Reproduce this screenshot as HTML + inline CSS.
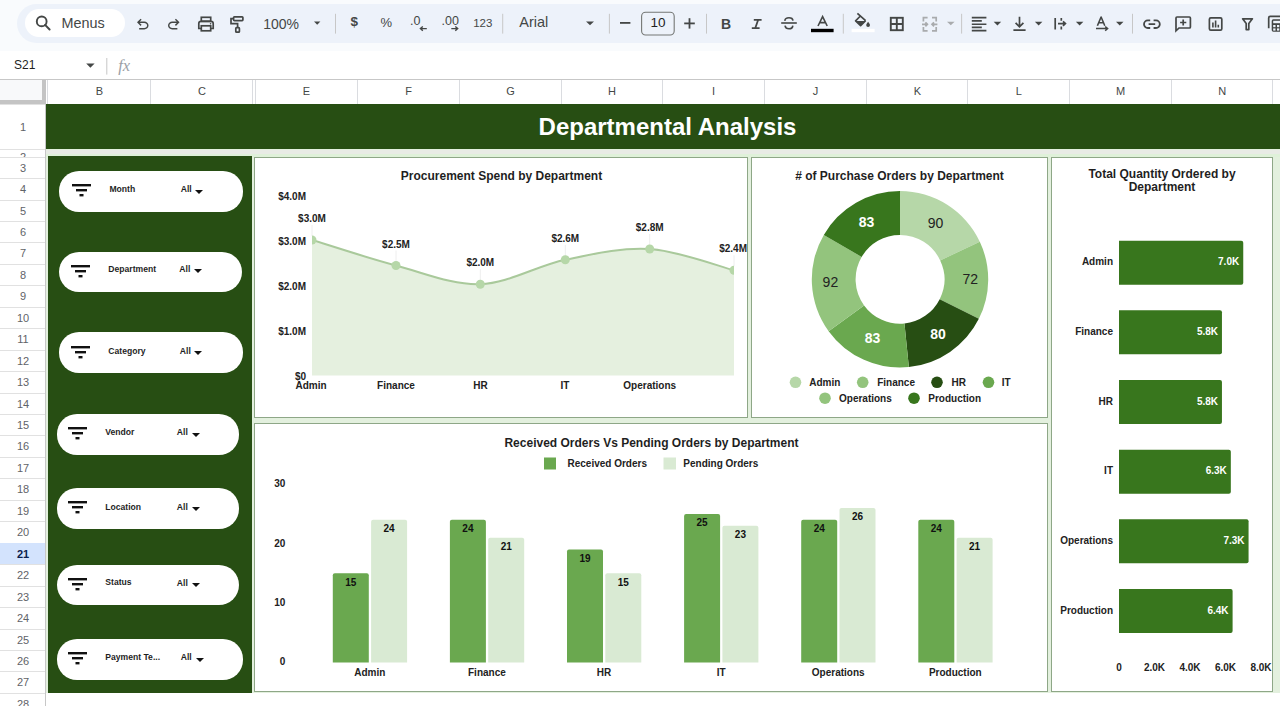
<!DOCTYPE html><html><head><meta charset="utf-8"><style>
*{box-sizing:border-box;margin:0;padding:0}
html,body{width:1280px;height:706px;overflow:hidden;background:#f9fbfd;font-family:"Liberation Sans",sans-serif;position:relative}
.a{position:absolute}
.t{position:absolute;white-space:nowrap}
.b10{font-size:10px;font-weight:bold;color:#222}
</style></head><body>
<div class="a" style="left:17px;top:4px;width:1300px;height:39px;background:#edf2fa;border-radius:20px"></div>
<div class="a" style="left:25px;top:9px;width:100px;height:28px;background:#fff;border-radius:14px"></div>
<div class="t" style="left:61.5px;top:14.8px;font-size:14.4px;line-height:17px;color:#444746">Menus</div>
<div class="a" style="left:0;top:51px;width:1280px;height:28px;background:#fff"></div>
<svg class="a" style="left:0;top:0" width="1280" height="80" viewBox="0 0 1280 80" font-family="Liberation Sans"><circle cx="41.7" cy="21.4" r="4.9" fill="none" stroke="#444746" stroke-width="1.9"/><line x1="45.1" y1="24.9" x2="49.6" y2="29.5" stroke="#444746" stroke-width="2" stroke-linecap="round"/><path transform="translate(134.12,33.08) scale(0.018)" d="M280-200v-80h284q63 0 109.5-40T720-420q0-60-46.5-100T564-560H312l104 104-56 56-200-200 200-200 56 56-104 104h252q97 0 166.5 63T800-420q0 94-69.5 157T564-200H280Z" fill="#444746"/><path transform="translate(165.12,33.08) scale(0.018)" d="M396-200q-97 0-166.5-63T160-420q0-94 69.5-157T396-640h252L544-744l56-56 200 200-200 200-56-56 104-104H396q-63 0-109.5 40T240-420q0 60 46.5 100T396-280h284v80H396Z" fill="#444746"/><rect x="201.3" y="17.3" width="9.4" height="4" fill="none" stroke="#444746" stroke-width="1.7"/><path d="M201.5,28.5 H198.8 V23.6 Q198.8,21.4 201,21.4 H211 Q213.2,21.4 213.2,23.6 V28.5 H210.5" fill="none" stroke="#444746" stroke-width="1.7"/><rect x="201.3" y="25.8" width="9.4" height="5" fill="none" stroke="#444746" stroke-width="1.7"/><circle cx="210.6" cy="23.8" r="0.8" fill="#444746"/><rect x="233.6" y="16.8" width="9.3" height="3.8" rx="0.8" fill="none" stroke="#444746" stroke-width="1.7"/><path d="M233.6,18.7 H231 V23.6 H237.6 V27.6" fill="none" stroke="#444746" stroke-width="1.7"/><rect x="235.8" y="27.6" width="3.6" height="4.6" rx="0.8" fill="none" stroke="#444746" stroke-width="1.7"/><path d="M314,21.4 L320.4,21.4 L317.2,24.8 Z" fill="#444746"/><path d="M586,21.4 L594,21.4 L590.0,25.2 Z" fill="#444746"/><path d="M947,21.8 L954.6,21.8 L950.8,25.2 Z" fill="#a9abad"/><path d="M993.7,21.7 L1001.2,21.7 L997.45,25.4 Z" fill="#444746"/><path d="M1034.9,21.7 L1042.4,21.7 L1038.65,25.4 Z" fill="#444746"/><path d="M1075.9,21.7 L1083.4,21.7 L1079.65,25.4 Z" fill="#444746"/><path d="M1116,21.7 L1123.5,21.7 L1119.75,25.4 Z" fill="#444746"/><rect x="335.0" y="13.8" width="1" height="19.8" fill="#c7c7c7"/><rect x="502.2" y="13.8" width="1" height="19.8" fill="#c7c7c7"/><rect x="608.9" y="13.8" width="1" height="19.8" fill="#c7c7c7"/><rect x="706.0" y="13.8" width="1" height="19.8" fill="#c7c7c7"/><rect x="842.8" y="13.8" width="1" height="19.8" fill="#c7c7c7"/><rect x="961.1" y="13.8" width="1" height="19.8" fill="#c7c7c7"/><rect x="1132.0" y="13.8" width="1" height="19.8" fill="#c7c7c7"/><text x="263.2" y="28.5" font-size="14" font-weight="normal" text-anchor="start" fill="#444746" >100%</text><text x="354.3" y="26.4" font-size="13.5" font-weight="bold" text-anchor="middle" fill="#444746" >$</text><text x="386.2" y="26.9" font-size="13" font-weight="normal" text-anchor="middle" fill="#444746" >%</text><text x="410" y="24.9" font-size="12.5" font-weight="normal" text-anchor="start" fill="#444746" >.0</text><path d="M426.8,28.6 H420.6 M422.8,26.4 L420.4,28.6 L422.8,30.8" fill="none" stroke="#444746" stroke-width="1.4"/><text x="441.6" y="24.9" font-size="12.5" font-weight="normal" text-anchor="start" fill="#444746" >.00</text><path d="M451.3,28.6 H457.5 M455.3,26.4 L457.7,28.6 L455.3,30.8" fill="none" stroke="#444746" stroke-width="1.4"/><text x="482.8" y="26.8" font-size="11.5" font-weight="normal" text-anchor="middle" fill="#444746" >123</text><text x="519.3" y="27.4" font-size="14.5" font-weight="normal" text-anchor="start" fill="#444746" >Arial</text><rect x="620" y="22" width="10.4" height="1.8" fill="#444746"/><rect x="641.6" y="12.2" width="32.6" height="22.8" rx="4" fill="none" stroke="#747775" stroke-width="1.1"/><text x="658" y="26.9" font-size="13.5" font-weight="normal" text-anchor="middle" fill="#1f1f1f" >10</text><rect x="684.2" y="22.5" width="10.6" height="1.8" fill="#444746"/><rect x="688.6" y="18.2" width="1.8" height="10.4" fill="#444746"/><text x="726" y="28.8" font-size="14" font-weight="bold" text-anchor="middle" fill="#444746" >B</text><path d="M753.8,19.8 H761.6 M751.8,28.2 H759.6 M758.2,19.8 L755.2,28.2" fill="none" stroke="#444746" stroke-width="1.8"/><rect x="781.2" y="22.2" width="15.6" height="1.6" fill="#444746"/><path d="M784.8,20.8 Q785.2,17.8 789,17.8 Q792.6,17.8 793,20.6 M785,25.6 Q785.6,28.8 789,28.8 Q792.6,28.8 792.8,25.6" fill="none" stroke="#444746" stroke-width="1.6"/><path d="M818,26 L822.6,16.6 L827.2,26 M819.8,22.6 H825.4" fill="none" stroke="#444746" stroke-width="1.6"/><rect x="811" y="28.8" width="22.6" height="3.4" fill="#000"/><path d="M857.4,13.4 L865.6,20.6 M860.4,16 L855.6,20.8 L860.6,25.6 L865.6,20.6" fill="none" stroke="#444746" stroke-width="1.7" stroke-linejoin="round"/><path d="M856,21 H865.2 L860.6,25.6 Z" fill="#444746"/><path d="M868.1,21.8 Q870,24 870,25 A1.9,1.9 0 0 1 866.2,25 Q866.2,24 868.1,21.8 Z" fill="#444746"/><rect x="851.6" y="28.8" width="23" height="3.4" fill="#fff"/><rect x="890.8" y="17.8" width="12" height="12.4" fill="none" stroke="#444746" stroke-width="1.9"/><path d="M896.8,17.8 V30.2 M890.8,24 H902.8" stroke="#444746" stroke-width="1.9"/><path d="M927.6,17.6 H923.4 V21.6 M923.4,27 V30.8 H927.6 M932,17.6 H936.2 V21.6 M936.2,27 V30.8 H932 M922,24.3 H927.4 M925.4,22.3 L927.4,24.3 L925.4,26.3 M937.4,24.3 H932 M934,22.3 L932,24.3 L934,26.3" fill="none" stroke="#a9abad" stroke-width="1.7"/><path d="M971.8,17.6 H986.4 M971.8,20.9 H981.8 M971.8,24.2 H986.4 M971.8,27.4 H981.8 M971.8,30.6 H986.4" stroke="#444746" stroke-width="1.6"/><path d="M1013.4,30.2 H1025.6 M1019.5,16.8 V26.6 M1015.6,22.8 L1019.5,26.8 L1023.4,22.8" fill="none" stroke="#444746" stroke-width="1.7"/><path d="M1055.2,18 V29.6 M1061.3,18 V20.8 M1061.3,26.4 V29.6 M1058,23.6 H1065.2 M1063,21.4 L1065.4,23.6 L1063,25.8" fill="none" stroke="#444746" stroke-width="1.7"/><path d="M1097.4,25.8 L1101.1,17 L1104.8,25.8 M1098.6,22.8 H1103.6" fill="none" stroke="#444746" stroke-width="1.6" stroke-linejoin="round"/><path d="M1096,28.6 H1107.4 M1105.2,26.5 L1107.6,28.6 L1105.2,30.7" fill="none" stroke="#444746" stroke-width="1.5"/><path d="M1150.2,20.4 H1147.8 A3.8,3.8 0 0 0 1147.8,28 H1150.2 M1153.6,20.4 H1156 A3.8,3.8 0 0 1 1156,28 H1153.6 M1148.6,24.2 H1155.2" fill="none" stroke="#444746" stroke-width="1.8"/><path d="M1176,30.8 V18 Q1176,17 1177,17 H1189.4 Q1190.4,17 1190.4,18 V27 Q1190.4,28 1189.4,28 H1179 Z" fill="none" stroke="#444746" stroke-width="1.7"/><path d="M1183.2,19.4 V25.6 M1180.1,22.5 H1186.3" stroke="#444746" stroke-width="1.7"/><rect x="1209.4" y="17.8" width="12.4" height="12.4" rx="1.4" fill="none" stroke="#444746" stroke-width="1.7"/><path d="M1212.9,22.4 V27.4 M1215.6,20.4 V27.4 M1218.3,24.8 V27.4" stroke="#444746" stroke-width="1.6"/><path d="M1242.6,18.8 H1252.4 L1248.8,23.4 V29.6 H1246.2 V23.4 Z" fill="none" stroke="#444746" stroke-width="1.7" stroke-linejoin="round"/><path d="M1268.7,28.3 V17.9 Q1268.7,16.4 1270.2,16.4 H1282" fill="none" stroke="#444746" stroke-width="1.7"/><rect x="1271.7" y="19.3" width="12" height="12.4" rx="1.6" fill="#444746"/><rect x="1273.2" y="20.8" width="10" height="2.4" fill="#edf2fa"/><rect x="1273.2" y="25" width="2.3" height="2.2" fill="#edf2fa"/><rect x="1277" y="25" width="2.3" height="2.2" fill="#edf2fa"/><rect x="1273.2" y="28.4" width="2.3" height="2.2" fill="#edf2fa"/><rect x="1277" y="28.4" width="2.3" height="2.2" fill="#edf2fa"/><path d="M86.2,63.6 L94.6,63.6 L90.4,67.8 Z" fill="#444746"/><rect x="106.3" y="58" width="1" height="16.6" fill="#c7c7c7"/><text x="118.2" y="70.6" font-size="16.5" font-weight="normal" text-anchor="start" fill="#9aa0a6" font-style="italic" font-family="Liberation Serif">fx</text></svg>
<div class="t" style="left:14px;top:58px;font-size:12px;line-height:14px;color:#1f1f1f">S21</div>
<div class="a" style="left:0;top:79px;width:1280px;height:1px;background:#c7c7c7"></div>
<div class="a" style="left:46px;top:80px;width:1234px;height:24px;background:#fff"></div>
<div class="a" style="left:0;top:80px;width:42px;height:20px;background:#f8f9fa"></div>
<div class="a" style="left:42px;top:80px;width:4px;height:24px;background:#c4c4c4"></div>
<div class="a" style="left:0;top:100px;width:46px;height:4px;background:#c4c4c4"></div>
<div class="a" style="left:47.0px;top:80px;width:1px;height:24px;background:#dadce0"></div>
<div class="t" style="left:48.0px;top:79px;width:103.0px;height:24px;line-height:24px;text-align:center;font-size:11px;color:#444746">B</div>
<div class="a" style="left:150.0px;top:80px;width:1px;height:24px;background:#dadce0"></div>
<div class="t" style="left:151.0px;top:79px;width:102.0px;height:24px;line-height:24px;text-align:center;font-size:11px;color:#444746">C</div>
<div class="a" style="left:254.5px;top:80px;width:1px;height:24px;background:#dadce0"></div>
<div class="t" style="left:255.5px;top:79px;width:102.0px;height:24px;line-height:24px;text-align:center;font-size:11px;color:#444746">E</div>
<div class="a" style="left:356.5px;top:80px;width:1px;height:24px;background:#dadce0"></div>
<div class="t" style="left:357.5px;top:79px;width:102.0px;height:24px;line-height:24px;text-align:center;font-size:11px;color:#444746">F</div>
<div class="a" style="left:458.5px;top:80px;width:1px;height:24px;background:#dadce0"></div>
<div class="t" style="left:459.5px;top:79px;width:102.0px;height:24px;line-height:24px;text-align:center;font-size:11px;color:#444746">G</div>
<div class="a" style="left:560.5px;top:80px;width:1px;height:24px;background:#dadce0"></div>
<div class="t" style="left:561.5px;top:79px;width:101.0px;height:24px;line-height:24px;text-align:center;font-size:11px;color:#444746">H</div>
<div class="a" style="left:661.5px;top:80px;width:1px;height:24px;background:#dadce0"></div>
<div class="t" style="left:662.5px;top:79px;width:102.0px;height:24px;line-height:24px;text-align:center;font-size:11px;color:#444746">I</div>
<div class="a" style="left:763.5px;top:80px;width:1px;height:24px;background:#dadce0"></div>
<div class="t" style="left:764.5px;top:79px;width:102.0px;height:24px;line-height:24px;text-align:center;font-size:11px;color:#444746">J</div>
<div class="a" style="left:865.5px;top:80px;width:1px;height:24px;background:#dadce0"></div>
<div class="t" style="left:866.5px;top:79px;width:101.7px;height:24px;line-height:24px;text-align:center;font-size:11px;color:#444746">K</div>
<div class="a" style="left:967.2px;top:80px;width:1px;height:24px;background:#dadce0"></div>
<div class="t" style="left:968.2px;top:79px;width:101.3px;height:24px;line-height:24px;text-align:center;font-size:11px;color:#444746">L</div>
<div class="a" style="left:1068.5px;top:80px;width:1px;height:24px;background:#dadce0"></div>
<div class="t" style="left:1069.5px;top:79px;width:102.0px;height:24px;line-height:24px;text-align:center;font-size:11px;color:#444746">M</div>
<div class="a" style="left:1170.5px;top:80px;width:1px;height:24px;background:#dadce0"></div>
<div class="t" style="left:1171.5px;top:79px;width:101.7px;height:24px;line-height:24px;text-align:center;font-size:11px;color:#444746">N</div>
<div class="a" style="left:1272.2px;top:80px;width:1px;height:24px;background:#dadce0"></div>
<div class="t" style="left:1273.2px;top:79px;width:107.8px;height:24px;line-height:24px;text-align:center;font-size:11px;color:#444746">O</div>
<div class="a" style="left:252px;top:80px;width:1px;height:24px;background:#dadce0"></div>
<div class="a" style="left:0;top:104px;width:46px;height:602px;background:#fff"></div>
<div class="a" style="left:45px;top:104px;width:1px;height:602px;background:#c7c7c7"></div>
<div class="a" style="left:0;top:104.0px;width:45px;height:1px;background:#e1e1e1"></div>
<div class="t" style="left:0;top:104.0px;width:46px;height:45.0px;line-height:46.0px;text-align:center;font-size:11px;color:#5f6368;font-weight:normal;overflow:hidden">1</div>
<div class="a" style="left:0;top:149.0px;width:45px;height:1px;background:#e1e1e1"></div>
<div class="t" style="left:0;top:149.0px;width:46px;height:7.6px;line-height:17.5px;text-align:center;font-size:11px;color:#5f6368;font-weight:normal;overflow:hidden">2</div>
<div class="a" style="left:0;top:156.6px;width:45px;height:1px;background:#e1e1e1"></div>
<div class="t" style="left:0;top:156.6px;width:46px;height:21.4px;line-height:22.4px;text-align:center;font-size:11px;color:#5f6368;font-weight:normal;overflow:hidden">3</div>
<div class="a" style="left:0;top:178.0px;width:45px;height:1px;background:#e1e1e1"></div>
<div class="t" style="left:0;top:178.0px;width:46px;height:21.4px;line-height:22.4px;text-align:center;font-size:11px;color:#5f6368;font-weight:normal;overflow:hidden">4</div>
<div class="a" style="left:0;top:199.5px;width:45px;height:1px;background:#e1e1e1"></div>
<div class="t" style="left:0;top:199.5px;width:46px;height:21.4px;line-height:22.4px;text-align:center;font-size:11px;color:#5f6368;font-weight:normal;overflow:hidden">5</div>
<div class="a" style="left:0;top:220.9px;width:45px;height:1px;background:#e1e1e1"></div>
<div class="t" style="left:0;top:220.9px;width:46px;height:21.4px;line-height:22.4px;text-align:center;font-size:11px;color:#5f6368;font-weight:normal;overflow:hidden">6</div>
<div class="a" style="left:0;top:242.4px;width:45px;height:1px;background:#e1e1e1"></div>
<div class="t" style="left:0;top:242.4px;width:46px;height:21.5px;line-height:22.5px;text-align:center;font-size:11px;color:#5f6368;font-weight:normal;overflow:hidden">7</div>
<div class="a" style="left:0;top:263.8px;width:45px;height:1px;background:#e1e1e1"></div>
<div class="t" style="left:0;top:263.8px;width:46px;height:21.4px;line-height:22.4px;text-align:center;font-size:11px;color:#5f6368;font-weight:normal;overflow:hidden">8</div>
<div class="a" style="left:0;top:285.3px;width:45px;height:1px;background:#e1e1e1"></div>
<div class="t" style="left:0;top:285.3px;width:46px;height:21.4px;line-height:22.4px;text-align:center;font-size:11px;color:#5f6368;font-weight:normal;overflow:hidden">9</div>
<div class="a" style="left:0;top:306.7px;width:45px;height:1px;background:#e1e1e1"></div>
<div class="t" style="left:0;top:306.7px;width:46px;height:21.4px;line-height:22.4px;text-align:center;font-size:11px;color:#5f6368;font-weight:normal;overflow:hidden">10</div>
<div class="a" style="left:0;top:328.2px;width:45px;height:1px;background:#e1e1e1"></div>
<div class="t" style="left:0;top:328.2px;width:46px;height:21.4px;line-height:22.4px;text-align:center;font-size:11px;color:#5f6368;font-weight:normal;overflow:hidden">11</div>
<div class="a" style="left:0;top:349.6px;width:45px;height:1px;background:#e1e1e1"></div>
<div class="t" style="left:0;top:349.6px;width:46px;height:21.4px;line-height:22.4px;text-align:center;font-size:11px;color:#5f6368;font-weight:normal;overflow:hidden">12</div>
<div class="a" style="left:0;top:371.1px;width:45px;height:1px;background:#e1e1e1"></div>
<div class="t" style="left:0;top:371.1px;width:46px;height:21.4px;line-height:22.4px;text-align:center;font-size:11px;color:#5f6368;font-weight:normal;overflow:hidden">13</div>
<div class="a" style="left:0;top:392.5px;width:45px;height:1px;background:#e1e1e1"></div>
<div class="t" style="left:0;top:392.5px;width:46px;height:21.4px;line-height:22.4px;text-align:center;font-size:11px;color:#5f6368;font-weight:normal;overflow:hidden">14</div>
<div class="a" style="left:0;top:414.0px;width:45px;height:1px;background:#e1e1e1"></div>
<div class="t" style="left:0;top:414.0px;width:46px;height:21.4px;line-height:22.4px;text-align:center;font-size:11px;color:#5f6368;font-weight:normal;overflow:hidden">15</div>
<div class="a" style="left:0;top:435.4px;width:45px;height:1px;background:#e1e1e1"></div>
<div class="t" style="left:0;top:435.4px;width:46px;height:21.4px;line-height:22.4px;text-align:center;font-size:11px;color:#5f6368;font-weight:normal;overflow:hidden">16</div>
<div class="a" style="left:0;top:456.9px;width:45px;height:1px;background:#e1e1e1"></div>
<div class="t" style="left:0;top:456.9px;width:46px;height:21.4px;line-height:22.4px;text-align:center;font-size:11px;color:#5f6368;font-weight:normal;overflow:hidden">17</div>
<div class="a" style="left:0;top:478.3px;width:45px;height:1px;background:#e1e1e1"></div>
<div class="t" style="left:0;top:478.3px;width:46px;height:21.4px;line-height:22.4px;text-align:center;font-size:11px;color:#5f6368;font-weight:normal;overflow:hidden">18</div>
<div class="a" style="left:0;top:499.8px;width:45px;height:1px;background:#e1e1e1"></div>
<div class="t" style="left:0;top:499.8px;width:46px;height:21.5px;line-height:22.5px;text-align:center;font-size:11px;color:#5f6368;font-weight:normal;overflow:hidden">19</div>
<div class="a" style="left:0;top:521.2px;width:45px;height:1px;background:#e1e1e1"></div>
<div class="t" style="left:0;top:521.2px;width:46px;height:21.5px;line-height:22.5px;text-align:center;font-size:11px;color:#5f6368;font-weight:normal;overflow:hidden">20</div>
<div class="a" style="left:0;top:542.7px;width:45px;height:1px;background:#e1e1e1"></div>
<div class="a" style="left:0;top:543.2px;width:45px;height:21.0px;background:#d3e3fd"></div>
<div class="t" style="left:0;top:542.7px;width:46px;height:21.5px;line-height:22.5px;text-align:center;font-size:11px;color:#0b1f4d;font-weight:bold;overflow:hidden">21</div>
<div class="a" style="left:0;top:564.1px;width:45px;height:1px;background:#e1e1e1"></div>
<div class="t" style="left:0;top:564.1px;width:46px;height:21.5px;line-height:22.5px;text-align:center;font-size:11px;color:#5f6368;font-weight:normal;overflow:hidden">22</div>
<div class="a" style="left:0;top:585.6px;width:45px;height:1px;background:#e1e1e1"></div>
<div class="t" style="left:0;top:585.6px;width:46px;height:21.5px;line-height:22.5px;text-align:center;font-size:11px;color:#5f6368;font-weight:normal;overflow:hidden">23</div>
<div class="a" style="left:0;top:607.1px;width:45px;height:1px;background:#e1e1e1"></div>
<div class="t" style="left:0;top:607.1px;width:46px;height:21.5px;line-height:22.5px;text-align:center;font-size:11px;color:#5f6368;font-weight:normal;overflow:hidden">24</div>
<div class="a" style="left:0;top:628.5px;width:45px;height:1px;background:#e1e1e1"></div>
<div class="t" style="left:0;top:628.5px;width:46px;height:21.5px;line-height:22.5px;text-align:center;font-size:11px;color:#5f6368;font-weight:normal;overflow:hidden">25</div>
<div class="a" style="left:0;top:650.0px;width:45px;height:1px;background:#e1e1e1"></div>
<div class="t" style="left:0;top:650.0px;width:46px;height:21.5px;line-height:22.5px;text-align:center;font-size:11px;color:#5f6368;font-weight:normal;overflow:hidden">26</div>
<div class="a" style="left:0;top:671.4px;width:45px;height:1px;background:#e1e1e1"></div>
<div class="t" style="left:0;top:671.4px;width:46px;height:21.5px;line-height:22.5px;text-align:center;font-size:11px;color:#5f6368;font-weight:normal;overflow:hidden">27</div>
<div class="a" style="left:0;top:692.9px;width:45px;height:1px;background:#e1e1e1"></div>
<div class="t" style="left:0;top:692.9px;width:46px;height:21.5px;line-height:22.5px;text-align:center;font-size:11px;color:#5f6368;font-weight:normal;overflow:hidden">28</div>
<div class="a" style="left:0;top:714.3px;width:45px;height:1px;background:#e1e1e1"></div>
<div class="t" style="left:0;top:714.3px;width:46px;height:21.5px;line-height:22.5px;text-align:center;font-size:11px;color:#5f6368;font-weight:normal;overflow:hidden">29</div>
<div class="a" style="left:46px;top:104px;width:1234px;height:589px;background:#e3f0de"></div>
<div class="a" style="left:46px;top:693px;width:1234px;height:13px;background:#fff"></div>
<div class="a" style="left:46px;top:150px;width:1234px;height:4px;background:#e8ebe5"></div>
<div class="a" style="left:46px;top:154px;width:1234px;height:3px;background:#dff1d9"></div>
<div class="a" style="left:46px;top:104px;width:1234px;height:45px;background:#274e13"></div>
<div class="t" style="left:46px;top:104px;width:1243px;height:45px;line-height:46px;text-align:center;font-size:24px;font-weight:bold;color:#fff">Departmental Analysis</div>
<div class="a" style="left:48px;top:156px;width:204px;height:537px;background:#274e13"></div>
<div class="a" style="left:59px;top:171px;width:184px;height:40.5px;background:#fff;border-radius:20px"><svg class="a" style="left:12.5px;top:12.6px" width="19" height="13" viewBox="0 0 19 13"><rect x="0" y="0" width="19" height="2.4" fill="#111"/><rect x="4" y="5" width="11" height="2.4" fill="#111"/><rect x="7.5" y="10" width="4" height="2.4" fill="#111"/></svg><div class="t" style="left:50.4px;top:-2.45px;line-height:40px;font-size:8.6px;font-weight:bold;color:#1f1f1f">Month</div><div class="t" style="left:121.7px;top:-2.45px;line-height:40px;font-size:8.6px;font-weight:bold;color:#1f1f1f">All</div><div class="a" style="left:136.2px;top:18.599999999999998px;width:0;height:0;border-left:4px solid transparent;border-right:4px solid transparent;border-top:4px solid #111"></div></div>
<div class="a" style="left:59px;top:251.5px;width:183px;height:40.5px;background:#fff;border-radius:20px"><svg class="a" style="left:11.6px;top:13.1px" width="19" height="13" viewBox="0 0 19 13"><rect x="0" y="0" width="19" height="2.4" fill="#111"/><rect x="4" y="5" width="11" height="2.4" fill="#111"/><rect x="7.5" y="10" width="4" height="2.4" fill="#111"/></svg><div class="t" style="left:49.3px;top:-2.1px;line-height:40px;font-size:8.6px;font-weight:bold;color:#1f1f1f">Department</div><div class="t" style="left:120.3px;top:-2.1px;line-height:40px;font-size:8.6px;font-weight:bold;color:#1f1f1f">All</div><div class="a" style="left:135px;top:17.9px;width:0;height:0;border-left:4px solid transparent;border-right:4px solid transparent;border-top:4px solid #111"></div></div>
<div class="a" style="left:59px;top:332.3px;width:183.5px;height:40.5px;background:#fff;border-radius:20px"><svg class="a" style="left:11.6px;top:13.5px" width="19" height="13" viewBox="0 0 19 13"><rect x="0" y="0" width="19" height="2.4" fill="#111"/><rect x="4" y="5" width="11" height="2.4" fill="#111"/><rect x="7.5" y="10" width="4" height="2.4" fill="#111"/></svg><div class="t" style="left:49.3px;top:-1.2px;line-height:40px;font-size:8.6px;font-weight:bold;color:#1f1f1f">Category</div><div class="t" style="left:120.8px;top:-1.2px;line-height:40px;font-size:8.6px;font-weight:bold;color:#1f1f1f">All</div><div class="a" style="left:135px;top:19.2px;width:0;height:0;border-left:4px solid transparent;border-right:4px solid transparent;border-top:4px solid #111"></div></div>
<div class="a" style="left:56.6px;top:414px;width:182px;height:40.5px;background:#fff;border-radius:20px"><svg class="a" style="left:11.5px;top:12.9px" width="19" height="13" viewBox="0 0 19 13"><rect x="0" y="0" width="19" height="2.4" fill="#111"/><rect x="4" y="5" width="11" height="2.4" fill="#111"/><rect x="7.5" y="10" width="4" height="2.4" fill="#111"/></svg><div class="t" style="left:48.699999999999996px;top:-2.1px;line-height:40px;font-size:8.6px;font-weight:bold;color:#1f1f1f">Vendor</div><div class="t" style="left:120.2px;top:-2.1px;line-height:40px;font-size:8.6px;font-weight:bold;color:#1f1f1f">All</div><div class="a" style="left:135.2px;top:18.5px;width:0;height:0;border-left:4px solid transparent;border-right:4px solid transparent;border-top:4px solid #111"></div></div>
<div class="a" style="left:56.6px;top:488.3px;width:182px;height:40.5px;background:#fff;border-radius:20px"><svg class="a" style="left:11.5px;top:12.9px" width="19" height="13" viewBox="0 0 19 13"><rect x="0" y="0" width="19" height="2.4" fill="#111"/><rect x="4" y="5" width="11" height="2.4" fill="#111"/><rect x="7.5" y="10" width="4" height="2.4" fill="#111"/></svg><div class="t" style="left:48.699999999999996px;top:-1.5px;line-height:40px;font-size:8.6px;font-weight:bold;color:#1f1f1f">Location</div><div class="t" style="left:120.2px;top:-1.7px;line-height:40px;font-size:8.6px;font-weight:bold;color:#1f1f1f">All</div><div class="a" style="left:135.2px;top:19.2px;width:0;height:0;border-left:4px solid transparent;border-right:4px solid transparent;border-top:4px solid #111"></div></div>
<div class="a" style="left:56.6px;top:564.8px;width:182px;height:40.5px;background:#fff;border-radius:20px"><svg class="a" style="left:11.5px;top:13.5px" width="19" height="13" viewBox="0 0 19 13"><rect x="0" y="0" width="19" height="2.4" fill="#111"/><rect x="4" y="5" width="11" height="2.4" fill="#111"/><rect x="7.5" y="10" width="4" height="2.4" fill="#111"/></svg><div class="t" style="left:48.699999999999996px;top:-2.45px;line-height:40px;font-size:8.6px;font-weight:bold;color:#1f1f1f">Status</div><div class="t" style="left:120.2px;top:-2.2px;line-height:40px;font-size:8.6px;font-weight:bold;color:#1f1f1f">All</div><div class="a" style="left:135.2px;top:18.5px;width:0;height:0;border-left:4px solid transparent;border-right:4px solid transparent;border-top:4px solid #111"></div></div>
<div class="a" style="left:56.6px;top:639px;width:186.1px;height:40.5px;background:#fff;border-radius:20px"><svg class="a" style="left:11.5px;top:12.6px" width="19" height="13" viewBox="0 0 19 13"><rect x="0" y="0" width="19" height="2.4" fill="#111"/><rect x="4" y="5" width="11" height="2.4" fill="#111"/><rect x="7.5" y="10" width="4" height="2.4" fill="#111"/></svg><div class="t" style="left:48.699999999999996px;top:-1.7px;line-height:40px;font-size:8.6px;font-weight:bold;color:#1f1f1f">Payment Te...</div><div class="t" style="left:124.1px;top:-1.7px;line-height:40px;font-size:8.6px;font-weight:bold;color:#1f1f1f">All</div><div class="a" style="left:139.0px;top:19.2px;width:0;height:0;border-left:4px solid transparent;border-right:4px solid transparent;border-top:4px solid #111"></div></div>
<div class="a" style="left:254px;top:157px;width:494px;height:261px;background:#fff;border:1px solid #8ea787"></div>
<div class="a" style="left:751px;top:157px;width:296.5px;height:261px;background:#fff;border:1px solid #8ea787"></div>
<div class="a" style="left:1051px;top:157px;width:222px;height:535px;background:#fff;border:1px solid #8ea787"></div>
<div class="a" style="left:254px;top:422.6px;width:793.5px;height:269.4px;background:#fff;border:1px solid #8ea787"></div>
<svg class="a" style="left:0;top:0" width="1280" height="706" viewBox="0 0 1280 706" font-family="Liberation Sans"><text x="501.5" y="175.5" font-size="12" font-weight="bold" text-anchor="middle" fill="#1f1f1f" dominant-baseline="central">Procurement Spend by Department</text><text x="306.0" y="196.0" font-size="10" font-weight="bold" text-anchor="end" fill="#222" dominant-baseline="central">$4.0M</text><text x="306.0" y="241.0" font-size="10" font-weight="bold" text-anchor="end" fill="#222" dominant-baseline="central">$3.0M</text><text x="306.0" y="286.0" font-size="10" font-weight="bold" text-anchor="end" fill="#222" dominant-baseline="central">$2.0M</text><text x="306.0" y="331.0" font-size="10" font-weight="bold" text-anchor="end" fill="#222" dominant-baseline="central">$1.0M</text><text x="306.0" y="376.0" font-size="10" font-weight="bold" text-anchor="end" fill="#222" dominant-baseline="central">$0</text><defs><clipPath id="c1"><rect x="312" y="150" width="422" height="226"/></clipPath></defs><path d="M312.00,240.00 C326.00,244.25 367.95,258.13 396.00,265.50 C424.05,272.87 452.08,285.15 480.30,284.20 C508.52,283.25 537.07,265.67 565.30,259.80 C593.53,253.93 621.58,247.25 649.70,249.00 C677.82,250.75 719.95,266.75 734.00,270.30 L734,375.5 L312,375.5 Z" fill="#e5f0df"/><line x1="312" y1="225.0" x2="312" y2="236.0" stroke="#eeeeee" stroke-width="1"/><line x1="396" y1="250.5" x2="396" y2="261.5" stroke="#eeeeee" stroke-width="1"/><line x1="480.3" y1="269.2" x2="480.3" y2="280.2" stroke="#eeeeee" stroke-width="1"/><line x1="565.3" y1="244.8" x2="565.3" y2="255.8" stroke="#eeeeee" stroke-width="1"/><line x1="649.7" y1="234.0" x2="649.7" y2="245.0" stroke="#eeeeee" stroke-width="1"/><line x1="734" y1="255.3" x2="734" y2="266.3" stroke="#eeeeee" stroke-width="1"/><path d="M312.00,240.00 C326.00,244.25 367.95,258.13 396.00,265.50 C424.05,272.87 452.08,285.15 480.30,284.20 C508.52,283.25 537.07,265.67 565.30,259.80 C593.53,253.93 621.58,247.25 649.70,249.00 C677.82,250.75 719.95,266.75 734.00,270.30" fill="none" stroke="#a9c99b" stroke-width="2" clip-path="url(#c1)"/><circle cx="312" cy="240.0" r="4.5" fill="#b6d7a8" clip-path="url(#c1)"/><circle cx="396" cy="265.5" r="4.5" fill="#b6d7a8" clip-path="url(#c1)"/><circle cx="480.3" cy="284.2" r="4.5" fill="#b6d7a8" clip-path="url(#c1)"/><circle cx="565.3" cy="259.8" r="4.5" fill="#b6d7a8" clip-path="url(#c1)"/><circle cx="649.7" cy="249.0" r="4.5" fill="#b6d7a8" clip-path="url(#c1)"/><circle cx="734" cy="270.3" r="4.5" fill="#b6d7a8" clip-path="url(#c1)"/><text x="312.0" y="218.5" font-size="10" font-weight="bold" text-anchor="middle" fill="#222" dominant-baseline="central">$3.0M</text><text x="396.0" y="244.0" font-size="10" font-weight="bold" text-anchor="middle" fill="#222" dominant-baseline="central">$2.5M</text><text x="480.3" y="262.7" font-size="10" font-weight="bold" text-anchor="middle" fill="#222" dominant-baseline="central">$2.0M</text><text x="565.3" y="238.3" font-size="10" font-weight="bold" text-anchor="middle" fill="#222" dominant-baseline="central">$2.6M</text><text x="649.7" y="227.5" font-size="10" font-weight="bold" text-anchor="middle" fill="#222" dominant-baseline="central">$2.8M</text><text x="747.0" y="248.8" font-size="10" font-weight="bold" text-anchor="end" fill="#222" dominant-baseline="central">$2.4M</text><text x="311.0" y="385.5" font-size="10" font-weight="bold" text-anchor="middle" fill="#222" dominant-baseline="central">Admin</text><text x="396.0" y="385.5" font-size="10" font-weight="bold" text-anchor="middle" fill="#222" dominant-baseline="central">Finance</text><text x="480.5" y="385.5" font-size="10" font-weight="bold" text-anchor="middle" fill="#222" dominant-baseline="central">HR</text><text x="565.0" y="385.5" font-size="10" font-weight="bold" text-anchor="middle" fill="#222" dominant-baseline="central">IT</text><text x="649.7" y="385.5" font-size="10" font-weight="bold" text-anchor="middle" fill="#222" dominant-baseline="central">Operations</text><text x="899.5" y="176.0" font-size="12" font-weight="bold" text-anchor="middle" fill="#1f1f1f" dominant-baseline="central"># of Purchase Orders by Department</text><path d="M900.00,191.10 A88.2,88.2 0 0 1 979.81,241.75 L940.17,260.40 A44.4,44.4 0 0 0 900.00,234.90 Z" fill="#b6d7a8"/><path d="M979.81,241.75 A88.2,88.2 0 0 1 978.84,318.85 L939.69,299.21 A44.4,44.4 0 0 0 940.17,260.40 Z" fill="#93c47d"/><path d="M978.84,318.85 A88.2,88.2 0 0 1 908.85,367.05 L904.46,323.48 A44.4,44.4 0 0 0 939.69,299.21 Z" fill="#274e13"/><path d="M908.85,367.05 A88.2,88.2 0 0 1 828.64,331.14 L864.08,305.40 A44.4,44.4 0 0 0 904.46,323.48 Z" fill="#6aa84f"/><path d="M828.64,331.14 A88.2,88.2 0 0 1 823.80,234.88 L861.64,256.94 A44.4,44.4 0 0 0 864.08,305.40 Z" fill="#93c47d"/><path d="M823.80,234.88 A88.2,88.2 0 0 1 900.00,191.10 L900.00,234.90 A44.4,44.4 0 0 0 861.64,256.94 Z" fill="#38761d"/><text x="935.5" y="223.0" font-size="14" font-weight="normal" text-anchor="middle" fill="#222" dominant-baseline="central">90</text><text x="970.2" y="279.3" font-size="14" font-weight="normal" text-anchor="middle" fill="#222" dominant-baseline="central">72</text><text x="938.0" y="333.8" font-size="14" font-weight="bold" text-anchor="middle" fill="#fff" dominant-baseline="central">80</text><text x="872.5" y="338.4" font-size="14" font-weight="bold" text-anchor="middle" fill="#fff" dominant-baseline="central">83</text><text x="830.4" y="282.0" font-size="14" font-weight="normal" text-anchor="middle" fill="#222" dominant-baseline="central">92</text><text x="866.6" y="221.6" font-size="14" font-weight="bold" text-anchor="middle" fill="#fff" dominant-baseline="central">83</text><circle cx="795.5" cy="382.3" r="5.8" fill="#b6d7a8"/><text x="809.2" y="382.3" font-size="10" font-weight="bold" text-anchor="start" fill="#222" dominant-baseline="central">Admin</text><circle cx="862.7" cy="382.3" r="5.8" fill="#93c47d"/><text x="877.2" y="382.3" font-size="10" font-weight="bold" text-anchor="start" fill="#222" dominant-baseline="central">Finance</text><circle cx="937" cy="382.3" r="5.8" fill="#274e13"/><text x="951.6" y="382.3" font-size="10" font-weight="bold" text-anchor="start" fill="#222" dominant-baseline="central">HR</text><circle cx="988.5" cy="382.3" r="5.8" fill="#6aa84f"/><text x="1001.8" y="382.3" font-size="10" font-weight="bold" text-anchor="start" fill="#222" dominant-baseline="central">IT</text><circle cx="825" cy="398.2" r="5.8" fill="#93c47d"/><text x="839.0" y="398.2" font-size="10" font-weight="bold" text-anchor="start" fill="#222" dominant-baseline="central">Operations</text><circle cx="914" cy="398.2" r="5.8" fill="#38761d"/><text x="928.3" y="398.2" font-size="10" font-weight="bold" text-anchor="start" fill="#222" dominant-baseline="central">Production</text><text x="1162.0" y="174.0" font-size="12" font-weight="bold" text-anchor="middle" fill="#1f1f1f" dominant-baseline="central">Total Quantity Ordered by</text><text x="1162.0" y="187.3" font-size="12" font-weight="bold" text-anchor="middle" fill="#1f1f1f" dominant-baseline="central">Department</text><path d="M1119,240.70 h122.25 a2,2 0 0 1 2,2 v40 a2,2 0 0 1 -2,2 h-122.25 Z" fill="#38761d"/><text x="1239.2" y="261.7" font-size="10" font-weight="bold" text-anchor="end" fill="#fff" dominant-baseline="central">7.0K</text><text x="1113.0" y="261.7" font-size="10" font-weight="bold" text-anchor="end" fill="#222" dominant-baseline="central">Admin</text><path d="M1119,310.35 h100.95 a2,2 0 0 1 2,2 v40 a2,2 0 0 1 -2,2 h-100.95 Z" fill="#38761d"/><text x="1218.0" y="331.4" font-size="10" font-weight="bold" text-anchor="end" fill="#fff" dominant-baseline="central">5.8K</text><text x="1113.0" y="331.4" font-size="10" font-weight="bold" text-anchor="end" fill="#222" dominant-baseline="central">Finance</text><path d="M1119,380.00 h100.95 a2,2 0 0 1 2,2 v40 a2,2 0 0 1 -2,2 h-100.95 Z" fill="#38761d"/><text x="1218.0" y="401.0" font-size="10" font-weight="bold" text-anchor="end" fill="#fff" dominant-baseline="central">5.8K</text><text x="1113.0" y="401.0" font-size="10" font-weight="bold" text-anchor="end" fill="#222" dominant-baseline="central">HR</text><path d="M1119,449.65 h109.83 a2,2 0 0 1 2,2 v40 a2,2 0 0 1 -2,2 h-109.83 Z" fill="#38761d"/><text x="1226.8" y="470.6" font-size="10" font-weight="bold" text-anchor="end" fill="#fff" dominant-baseline="central">6.3K</text><text x="1113.0" y="470.6" font-size="10" font-weight="bold" text-anchor="end" fill="#222" dominant-baseline="central">IT</text><path d="M1119,519.30 h127.57 a2,2 0 0 1 2,2 v40 a2,2 0 0 1 -2,2 h-127.57 Z" fill="#38761d"/><text x="1244.6" y="540.3" font-size="10" font-weight="bold" text-anchor="end" fill="#fff" dominant-baseline="central">7.3K</text><text x="1113.0" y="540.3" font-size="10" font-weight="bold" text-anchor="end" fill="#222" dominant-baseline="central">Operations</text><path d="M1119,588.95 h111.60 a2,2 0 0 1 2,2 v40 a2,2 0 0 1 -2,2 h-111.60 Z" fill="#38761d"/><text x="1228.6" y="610.0" font-size="10" font-weight="bold" text-anchor="end" fill="#fff" dominant-baseline="central">6.4K</text><text x="1113.0" y="610.0" font-size="10" font-weight="bold" text-anchor="end" fill="#222" dominant-baseline="central">Production</text><text x="1119.0" y="667.5" font-size="10" font-weight="bold" text-anchor="middle" fill="#222" dominant-baseline="central">0</text><text x="1154.5" y="667.5" font-size="10" font-weight="bold" text-anchor="middle" fill="#222" dominant-baseline="central">2.0K</text><text x="1190.0" y="667.5" font-size="10" font-weight="bold" text-anchor="middle" fill="#222" dominant-baseline="central">4.0K</text><text x="1225.5" y="667.5" font-size="10" font-weight="bold" text-anchor="middle" fill="#222" dominant-baseline="central">6.0K</text><text x="1261.0" y="667.5" font-size="10" font-weight="bold" text-anchor="middle" fill="#222" dominant-baseline="central">8.0K</text><text x="651.5" y="442.5" font-size="12" font-weight="bold" text-anchor="middle" fill="#1f1f1f" dominant-baseline="central">Received Orders Vs Pending Orders by Department</text><rect x="544" y="457.5" width="12" height="12" fill="#6aa84f"/><text x="567.5" y="463.5" font-size="10" font-weight="bold" text-anchor="start" fill="#222" dominant-baseline="central">Received Orders</text><rect x="663.5" y="457.5" width="12.5" height="12" fill="#d9ead3"/><text x="683.3" y="463.5" font-size="10" font-weight="bold" text-anchor="start" fill="#222" dominant-baseline="central">Pending Orders</text><text x="285.4" y="661.9" font-size="10" font-weight="bold" text-anchor="end" fill="#222" dominant-baseline="central">0</text><text x="285.4" y="602.5" font-size="10" font-weight="bold" text-anchor="end" fill="#222" dominant-baseline="central">10</text><text x="285.4" y="543.1" font-size="10" font-weight="bold" text-anchor="end" fill="#222" dominant-baseline="central">20</text><text x="285.4" y="483.7" font-size="10" font-weight="bold" text-anchor="end" fill="#222" dominant-baseline="central">30</text><path d="M332.80,662.4 v-87.10 a2,2 0 0 1 2,-2 h32 a2,2 0 0 1 2,2 v87.10 Z" fill="#6aa84f"/><text x="350.8" y="582.1" font-size="10" font-weight="bold" text-anchor="middle" fill="#111" dominant-baseline="central">15</text><path d="M371.10,662.4 v-140.56 a2,2 0 0 1 2,-2 h32 a2,2 0 0 1 2,2 v140.56 Z" fill="#d9ead3"/><text x="389.1" y="528.6" font-size="10" font-weight="bold" text-anchor="middle" fill="#111" dominant-baseline="central">24</text><text x="369.8" y="672.8" font-size="10" font-weight="bold" text-anchor="middle" fill="#222" dominant-baseline="central">Admin</text><path d="M449.90,662.4 v-140.56 a2,2 0 0 1 2,-2 h32 a2,2 0 0 1 2,2 v140.56 Z" fill="#6aa84f"/><text x="467.9" y="528.6" font-size="10" font-weight="bold" text-anchor="middle" fill="#111" dominant-baseline="central">24</text><path d="M488.20,662.4 v-122.74 a2,2 0 0 1 2,-2 h32 a2,2 0 0 1 2,2 v122.74 Z" fill="#d9ead3"/><text x="506.2" y="546.5" font-size="10" font-weight="bold" text-anchor="middle" fill="#111" dominant-baseline="central">21</text><text x="486.9" y="672.8" font-size="10" font-weight="bold" text-anchor="middle" fill="#222" dominant-baseline="central">Finance</text><path d="M567.00,662.4 v-110.86 a2,2 0 0 1 2,-2 h32 a2,2 0 0 1 2,2 v110.86 Z" fill="#6aa84f"/><text x="585.0" y="558.3" font-size="10" font-weight="bold" text-anchor="middle" fill="#111" dominant-baseline="central">19</text><path d="M605.30,662.4 v-87.10 a2,2 0 0 1 2,-2 h32 a2,2 0 0 1 2,2 v87.10 Z" fill="#d9ead3"/><text x="623.3" y="582.1" font-size="10" font-weight="bold" text-anchor="middle" fill="#111" dominant-baseline="central">15</text><text x="604.0" y="672.8" font-size="10" font-weight="bold" text-anchor="middle" fill="#222" dominant-baseline="central">HR</text><path d="M684.10,662.4 v-146.50 a2,2 0 0 1 2,-2 h32 a2,2 0 0 1 2,2 v146.50 Z" fill="#6aa84f"/><text x="702.1" y="522.7" font-size="10" font-weight="bold" text-anchor="middle" fill="#111" dominant-baseline="central">25</text><path d="M722.40,662.4 v-134.62 a2,2 0 0 1 2,-2 h32 a2,2 0 0 1 2,2 v134.62 Z" fill="#d9ead3"/><text x="740.4" y="534.6" font-size="10" font-weight="bold" text-anchor="middle" fill="#111" dominant-baseline="central">23</text><text x="721.1" y="672.8" font-size="10" font-weight="bold" text-anchor="middle" fill="#222" dominant-baseline="central">IT</text><path d="M801.20,662.4 v-140.56 a2,2 0 0 1 2,-2 h32 a2,2 0 0 1 2,2 v140.56 Z" fill="#6aa84f"/><text x="819.2" y="528.6" font-size="10" font-weight="bold" text-anchor="middle" fill="#111" dominant-baseline="central">24</text><path d="M839.50,662.4 v-152.44 a2,2 0 0 1 2,-2 h32 a2,2 0 0 1 2,2 v152.44 Z" fill="#d9ead3"/><text x="857.5" y="516.8" font-size="10" font-weight="bold" text-anchor="middle" fill="#111" dominant-baseline="central">26</text><text x="838.2" y="672.8" font-size="10" font-weight="bold" text-anchor="middle" fill="#222" dominant-baseline="central">Operations</text><path d="M918.30,662.4 v-140.56 a2,2 0 0 1 2,-2 h32 a2,2 0 0 1 2,2 v140.56 Z" fill="#6aa84f"/><text x="936.3" y="528.6" font-size="10" font-weight="bold" text-anchor="middle" fill="#111" dominant-baseline="central">24</text><path d="M956.60,662.4 v-122.74 a2,2 0 0 1 2,-2 h32 a2,2 0 0 1 2,2 v122.74 Z" fill="#d9ead3"/><text x="974.6" y="546.5" font-size="10" font-weight="bold" text-anchor="middle" fill="#111" dominant-baseline="central">21</text><text x="955.3" y="672.8" font-size="10" font-weight="bold" text-anchor="middle" fill="#222" dominant-baseline="central">Production</text></svg>
</body></html>
